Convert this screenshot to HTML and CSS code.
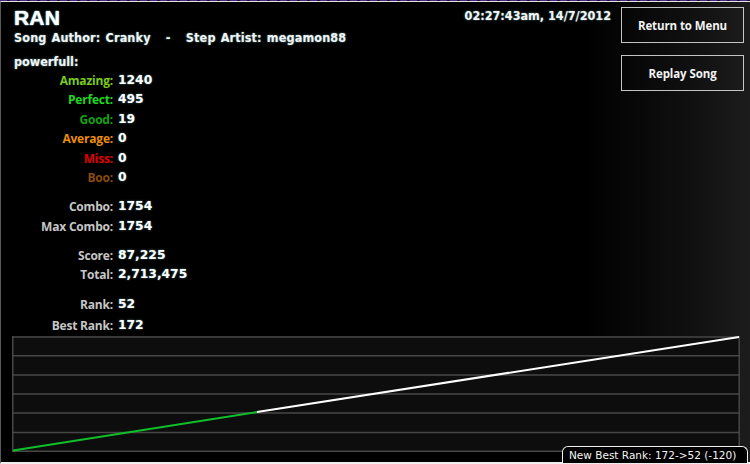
FILE: index.html
```html
<!DOCTYPE html>
<html>
<head>
<meta charset="utf-8">
<title>Results - RAN</title>
<link rel="stylesheet" href="styles.css">
</head>
<body>
<div class="rim"></div>
<div class="screen">
  <div class="upper">
    <div class="left">
      <h1 class="title">RAN</h1>
      <p class="credits">Song Author: Cranky &nbsp; - &nbsp; Step Artist: megamon88</p>
      <p class="mode">powerfull:</p>
      <div class="stats">
        <span class="lbl amazing">Amazing:</span><span class="val">1240</span>
        <span class="lbl perfect">Perfect:</span><span class="val">495</span>
        <span class="lbl good">Good:</span><span class="val">19</span>
        <span class="lbl average">Average:</span><span class="val">0</span>
        <span class="lbl miss">Miss:</span><span class="val">0</span>
        <span class="lbl boo">Boo:</span><span class="val">0</span>

        <span class="lbl gap">Combo:</span><span class="val gap">1754</span>
        <span class="lbl">Max Combo:</span><span class="val">1754</span>

        <span class="lbl gap">Score:</span><span class="val gap">87,225</span>
        <span class="lbl tight">Total:</span><span class="val tight">2,713,475</span>

        <span class="lbl gap wide">Rank:</span><span class="val gap wide">52</span>
        <span class="lbl loose">Best Rank:</span><span class="val loose">172</span>
      </div>
    </div>
    <div class="stamp">02:27:43am, 14/7/2012</div>
    <div class="actions">
      <button class="btn">Return to Menu</button>
      <button class="btn">Replay Song</button>
    </div>
  </div>
  <div class="graph">
    <svg width="728" height="116" viewBox="0 0 728 116">
      <rect x="0" y="0" width="728" height="116" fill="#0d0d0d"/>
      <g stroke="#474747" stroke-width="1.5">
        <line x1="0" y1="1" x2="728" y2="1"/>
        <line x1="0" y1="19.8" x2="728" y2="19.8"/>
        <line x1="0" y1="39" x2="728" y2="39"/>
        <line x1="0" y1="58" x2="728" y2="58"/>
        <line x1="0" y1="77" x2="728" y2="77"/>
        <line x1="0" y1="96.5" x2="728" y2="96.5"/>
        <line x1="0" y1="115.2" x2="728" y2="115.2"/>
        <line x1="0.75" y1="0" x2="0.75" y2="116"/>
        <line x1="727.2" y1="0" x2="727.2" y2="116"/>
      </g>
      <line x1="1" y1="114.5" x2="245" y2="76" stroke="#10c02a" stroke-width="2"/>
      <line x1="245" y1="76" x2="727" y2="1" stroke="#ffffff" stroke-width="2"/>
    </svg>
    <div class="badge">New Best Rank: 172-&gt;52 (-120)</div>
  </div>
</div>
</body>
</html>
```

FILE: styles.css
```css
html, body {
  margin: 0;
  padding: 0;
  background: #000;
}

body {
  width: 750px;
  height: 464px;
  overflow: hidden;
  font-family: "DejaVu Sans", Verdana, sans-serif;
  color: #fff;
}

/* window rim along the top edge */
.rim {
  height: 1px;
  background: repeating-linear-gradient(90deg, #4b2a86 0 7px, #1a0f2e 7px 10px);
}

.screen {
  position: relative;
  height: 460px;
  border-top: 1px solid #e4e4e4;
  border-left: 1px solid #5a5a5a;
  border-bottom: 2px solid #eeeeee;
  box-sizing: content-box;
  background: linear-gradient(90deg, #000 0%, #000 78%, #101010 92%, #1c1c1c 100%);
}

.upper {
  display: flex;
  align-items: flex-start;
  height: 334px;
}

.left {
  flex: 1;
  padding-left: 13px;
}

.title {
  margin: 3px 0 0;
  font-family: "Liberation Sans", Arial, sans-serif;
  font-weight: bold;
  font-size: 21px;
  line-height: 26px;
  letter-spacing: 0.2px;
  text-shadow: 0 0 2px rgba(160, 255, 255, 0.75), 0 0 1px #aff;
}

.credits {
  margin: -1px 0 0;
  font-weight: bold;
  font-size: 12.5px;
  line-height: 16px;
  font-family: "DejaVu Sans Condensed", "DejaVu Sans", sans-serif;
  letter-spacing: 0.15px;
  color: #f4f4f4;
  text-shadow: 0 0 2px rgba(160, 255, 255, 0.6);
  word-spacing: 1px;
}

.mode {
  margin: 8px 0 0;
  font-weight: bold;
  font-size: 12.5px;
  line-height: 16px;
  font-family: "DejaVu Sans Condensed", "DejaVu Sans", sans-serif;
  color: #f4f4f4;
  text-shadow: 0 0 2px rgba(160, 255, 255, 0.6);
}

.stats {
  display: grid;
  grid-template-columns: 99px auto;
  column-gap: 5px;
  margin-top: 1px;
  line-height: 19.4px;
}

.lbl {
  text-align: right;
  font-family: "Open Sans", sans-serif;
  font-weight: 700;
  font-size: 12px;
  color: #c6c6c6;
  letter-spacing: -0.2px;
}

.val {
  font-family: "DejaVu Sans", Verdana, sans-serif;
  font-weight: bold;
  font-size: 12.3px;
  color: #fff;
  text-shadow: 0 0 2px rgba(160, 255, 255, 0.55);
}

.gap { margin-top: 10px; }
.gap.wide { margin-top: 11px; }
.tight { margin-top: -1px; }
.loose { margin-top: 1.5px; }

.amazing { color: #79cc1d; }
.perfect { color: #1ed81e; }
.good { color: #15a015; }
.average { color: #e88d0b; }
.miss { color: #e00000; }
.boo { color: #8a4a12; }

.stamp {
  margin: 6px 10px 0 0;
  font-weight: bold;
  font-size: 12.5px;
  line-height: 16px;
  font-family: "DejaVu Sans Condensed", "DejaVu Sans", sans-serif;
  color: #f4f4f4;
  text-shadow: 0 0 2px rgba(160, 255, 255, 0.6);
}

.actions {
  display: flex;
  flex-direction: column;
  gap: 12px;
  margin: 5px 6px 0 0;
}

.btn {
  width: 123px;
  height: 36px;
  background: transparent;
  border: 1px solid #c4c4c4;
  color: #f2f2f2;
  font-family: "Open Sans", sans-serif;
  font-weight: 700;
  font-size: 11.5px;
  letter-spacing: -0.1px;
  padding: 0;
}

.graph {
  position: relative;
  margin-left: 11px;
  height: 126px;
}

.graph svg {
  display: block;
}

.badge {
  position: absolute;
  left: 550px;
  bottom: -1px;
  width: 178px;
  height: 16px;
  border: 1.5px solid #f2f2f2;
  border-bottom: none;
  border-radius: 6px 6px 0 0;
  background: #000;
  font-family: "DejaVu Sans", Verdana, sans-serif;
  font-size: 10.5px;
  line-height: 17px;
  padding-left: 6px;
  box-sizing: content-box;
  color: #f4f4f4;
}
```
